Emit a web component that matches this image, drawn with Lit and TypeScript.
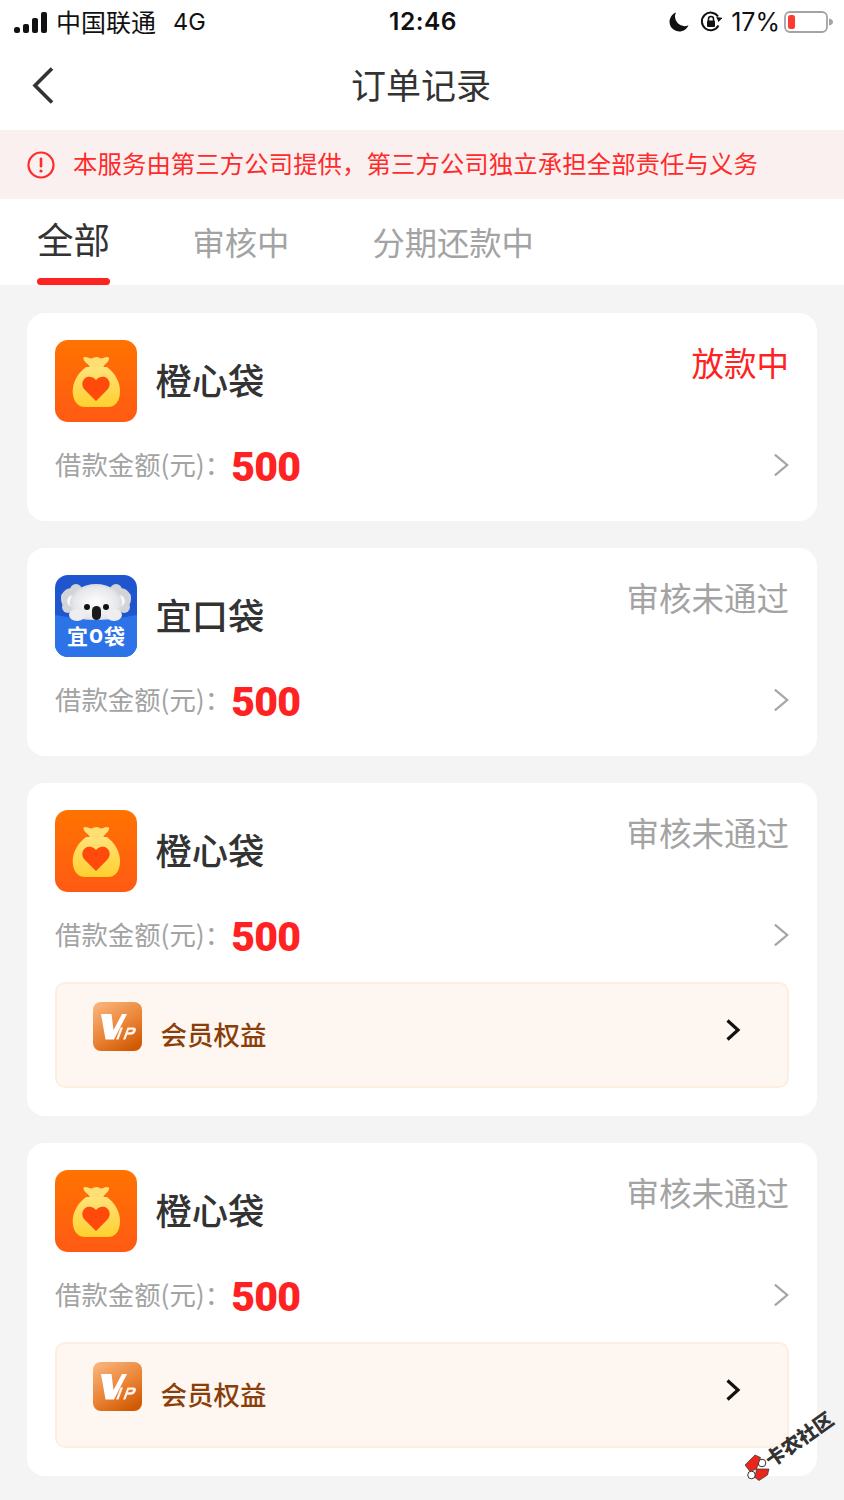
import { LitElement, html, css } from "lit";
import { customElement } from "lit/decorators.js";

let uid = 0;

const bagIcon = () => {
  const id = `bag${uid++}`;
  return html`<svg class="app-icon" viewBox="0 0 82 82">
    <defs>
      <linearGradient id="${id}a" x1="0" y1="0" x2="0" y2="1"><stop offset="0" stop-color="#ff7300"/><stop offset="1" stop-color="#ff5a14"/></linearGradient>
      <linearGradient id="${id}b" x1="0" y1="0" x2="0" y2="1"><stop offset="0" stop-color="#ffe27a"/><stop offset="1" stop-color="#ffd02e"/></linearGradient>
    </defs>
    <rect width="82" height="82" rx="13" fill="url(#${id}a)"/>
    <path d="M28 17.500c3-1.500 6 .5 8.500 1 2-.5 3.500-1.500 5-1.500s3 1 4.500 1.500c2.500-.5 5-2.500 8-1 .5 3-2 5-4 7-1 1-1.500 2-2 3h-13c-.5-1-1-2-2-3-2-2-5-4-4.500-7z" fill="#ffdf73"/>
    <path d="M31 27h21c8 6 13 15 13 24 0 10-4.500 16-12 16H30c-7.500 0-12.300-6-12.300-16 0-9 5.300-18 13.300-24z" fill="url(#${id}b)"/>
    <path d="M41 61 30 50c-3.500-3.500-3.500-8.500-.5-11.300 3-2.800 8-2.500 11.500 1.300 3.500-3.800 8.500-4.100 11.500-1.300 3 2.800 3 7.800-.5 11.300z" fill="#ff4a0c"/>
  </svg>`;
};

const koalaIcon = () => html`<svg class="app-icon" viewBox="0 0 82 82">
  <defs>
    <radialGradient id="fur" cx=".5" cy=".5" r=".6"><stop offset="0" stop-color="#ffffff"/><stop offset=".7" stop-color="#e6e7ea"/><stop offset="1" stop-color="#c4c6cc"/></radialGradient>
  </defs>
  <rect width="82" height="82" rx="13" fill="#1f55cf"/>
  <g fill="#d3d4d8">
    <circle cx="17" cy="24" r="11"/><circle cx="11" cy="22" r="5"/><circle cx="13" cy="32" r="6"/><circle cx="21" cy="15" r="6"/>
    <circle cx="65" cy="24" r="11"/><circle cx="71" cy="22" r="5"/><circle cx="69" cy="32" r="6"/><circle cx="61" cy="15" r="6"/>
  </g>
  <circle cx="18" cy="26" r="6" fill="#f7f7f8"/>
  <circle cx="64" cy="26" r="6" fill="#f7f7f8"/>
  <ellipse cx="41" cy="28" rx="26" ry="19" fill="url(#fur)"/>
  <path d="M0 40c14 2 24 5 41 5s27-3 41-5v29a13 13 0 0 1-13 13H13A13 13 0 0 1 0 69z" fill="#2d73e8"/>
  <ellipse cx="22" cy="40" rx="8" ry="6" fill="#eeeef0"/>
  <ellipse cx="59" cy="40" rx="8" ry="6" fill="#eeeef0"/>
  <circle cx="32" cy="32" r="3" fill="#111"/>
  <circle cx="51" cy="32" r="3" fill="#111"/>
  <rect x="37" y="31" width="9" height="14" rx="4.500" fill="#1a1a1a"/>
  <text x="41" y="69" text-anchor="middle" class="koala-text">宜<tspan class="koala-o" dx="1" dy="-1">O</tspan><tspan dx="1" dy="1">袋</tspan></text>
</svg>`;

const vipIcon = () => {
  const id = `vip${uid++}`;
  return html`<svg class="vip-icon" viewBox="0 0 49 49">
    <defs><linearGradient id="${id}" x1=".2" y1="0" x2=".8" y2="1"><stop offset="0" stop-color="#f9b077"/><stop offset=".55" stop-color="#e98233"/><stop offset="1" stop-color="#cf5700"/></linearGradient></defs>
    <rect width="49" height="49" rx="8" fill="url(#${id})"/>
    <path d="M8 12h10.500l2 16L29 12h5L21 37.500H12.500z" fill="#fff"/>
    <path d="M23 37.500l4.500-12h2.500l-4.500 12zM30 37.500l4.500-12h6c2.500 0 3 1.800 2.200 3.800-1 2.500-3 3.500-5.500 3.500h-3l-1.800 4.700zM34.800 30.200h2.800c1.200 0 2-.5 2.300-1.400.3-.8 0-1.100-.8-1.100h-3.200z" fill="#fff" fill-rule="evenodd" opacity=".92"/>
  </svg>`;
};

const chevron = () => html`<svg class="chev" viewBox="0 0 18 26"><path d="M2 2l13 11L2 24" fill="none" stroke="#a6a6a6" stroke-width="2.400"/></svg>`;

interface Order { name: string; icon: "bag" | "koala"; status: string; active?: boolean; vip?: boolean; }

const orders: Order[] = [
  { name: "橙心袋", icon: "bag", status: "放款中", active: true },
  { name: "宜口袋", icon: "koala", status: "审核未通过" },
  { name: "橙心袋", icon: "bag", status: "审核未通过", vip: true },
  { name: "橙心袋", icon: "bag", status: "审核未通过", vip: true },
];

@customElement("app-root")
export class AppRoot extends LitElement {
  static styles = css`
    :host { display: block; position: relative; width: 844px; height: 1500px; overflow: hidden; background: #f4f4f4; font-family: "Noto Sans CJK SC", "Liberation Sans", sans-serif; }
    .status { height: 44px; background: #fff; display: grid; grid-template-columns: 1fr auto 1fr; align-items: center; padding: 0 11px 4px 14px; box-sizing: border-box; color: #111; }
    .s-left { display: flex; align-items: center; font-size: 25px; line-height: 40px; }
    .sig { width: 34px; height: 21px; margin-right: 8px; margin-top: 2px; }
    .fourg { font-family: "Inter", "Liberation Sans", sans-serif; font-size: 23.500px; margin-left: 17px; margin-top: 2px; }
    .time { font-family: "Inter", "Liberation Sans", sans-serif; font-size: 24.500px; font-weight: 600; letter-spacing: .5px; margin-left: -1px; }
    .s-right { display: flex; justify-content: flex-end; align-items: center; font-family: "Inter", "Liberation Sans", sans-serif; font-size: 25px; margin-top: 2px; }
    .moon { width: 20px; height: 20px; margin-right: 11px; }
    .lock { width: 22px; height: 22px; margin-right: 9px; }
    .batt { width: 49px; height: 22px; margin-left: 4px; }
    .nav { height: 86px; box-sizing: border-box; padding-bottom: 8px; background: #fff; display: flex; align-items: center; justify-content: center; position: relative; font-size: 35px; color: #333; }
    .nav h1 { font: inherit; margin: 0 0 0 -2px; }
    .back { position: absolute; left: 30px; top: 22px; width: 26px; height: 38px; }
    .banner { height: 69px; box-sizing: border-box; padding-bottom: 4px; background: #fbf0f0; display: flex; align-items: center; padding-left: 26px; color: #ff2a2a; font-size: 24.400px; letter-spacing: .07px; }
    .warn { width: 30px; height: 30px; margin-right: 17px; margin-top: 4px; flex: none; }
    .tabs { height: 86px; background: #fff; display: flex; align-items: flex-start; padding-left: 37px; font-size: 32.300px; color: #a3a3a3; }
    .tab { height: 86px; line-height: 84px; margin-right: 83px; position: relative; }
    .tab.on { font-size: 36.500px; color: #333; line-height: 80px; margin-right: 82.500px; }
    .tab.on::after { content: ""; position: absolute; left: 0; right: 0; bottom: 0; height: 7px; border-radius: 4px; background: #ff2222; }
    .list { display: flex; flex-direction: column; gap: 27px; padding: 28px 27px; }
    .card { background: #fff; border-radius: 18px; padding: 27px 28px; }
    .head { display: flex; align-items: flex-start; }
    .app-icon { width: 82px; height: 82px; flex: none; display: block; }
    .koala-text { font-size: 21px; font-weight: 700; fill: #fff; }
    .koala-o { font-size: 18px; font-weight: 900; }
    .name { font-size: 36.300px; color: #333; font-weight: 500; line-height: 78px; margin-left: 18.500px; flex: 1; }
    .st { font-size: 32.500px; line-height: 44px; color: #a3a3a3; }
    .st.on { color: #ff2222; }
    .row { display: flex; align-items: center; height: 58px; margin-top: 14px; }
    .label { font-size: 26.400px; line-height: 56px; height: 58px; color: #a3a3a3; }
    .amt { font-family: "Roboto", "Liberation Sans", sans-serif; font-weight: 900; font-size: 41px; letter-spacing: -.7px; line-height: 58px; color: #ff2222; flex: 1; padding-top: 4px; }
    .chev { width: 17px; height: 26px; margin-right: -1px; }
    .vip { margin: 18px 0 1px; height: 106px; box-sizing: border-box; border: 2px solid #fdeee2; border-radius: 10px; background: #fef6f0; display: flex; align-items: flex-start; padding: 18px 46px 0 36px; }
    .vip-icon { width: 49px; height: 49px; flex: none; display: block; }
    .vip span { flex: 1; margin-left: 18.500px; margin-top: 12px; font-size: 26.500px; color: #8a3f0a; font-weight: 500; line-height: 40px; }
    .vchev { width: 16px; height: 24px; margin-top: 16px; }
    .mark { position: absolute; left: 745px; top: 1456px; display: flex; align-items: center; height: 24px; transform: rotate(-35deg); transform-origin: 12px 12px; font-size: 19.500px; font-weight: 900; color: #333; white-space: nowrap; text-shadow: 0 0 1px #fff; line-height: 24px; }
    .mark svg { width: 24px; height: 24px; flex: none; overflow: visible; }
  `;

  render() {
    return html`
      <div class="status">
        <div class="s-left">
          <svg class="sig" viewBox="0 0 34 21">
            <rect x="0" y="15" width="6" height="6" rx="2.500" fill="#111"/>
            <rect x="9" y="12" width="6" height="9" rx="2" fill="#111"/>
            <rect x="18" y="6" width="6" height="15" rx="2" fill="#111"/>
            <rect x="27" y="0" width="6" height="21" rx="2" fill="#111"/>
          </svg>
          中国联通<span class="fourg">4G</span>
        </div>
        <div class="time">12:46</div>
        <div class="s-right">
          <svg class="moon" viewBox="0 0 20 20"><path d="M7 .5a9.800 9.800 0 1 0 12.500 12.700A9.500 9.500 0 0 1 7 .5z" fill="#111"/></svg>
          <svg class="lock" viewBox="0 0 22 22">
            <path d="M18.500 14.500A8.800 8.800 0 1 1 18 5.500" fill="none" stroke="#111" stroke-width="2"/>
            <path d="M21 8.500l-5.500.5 3-5.500z" fill="#111" transform="rotate(70 18 8)"/>
            <rect x="7" y="9.500" width="8" height="6.500" rx="1" fill="#111"/>
            <path d="M8.500 10V8a2.500 2.500 0 0 1 5 0v2" fill="none" stroke="#111" stroke-width="1.500"/>
          </svg>
          17%
          <svg class="batt" viewBox="0 0 49 22">
            <rect x="1" y="1" width="42" height="20" rx="5" fill="#fff" stroke="#a3a3a3" stroke-width="1.800"/>
            <rect x="4" y="4" width="7" height="14" rx="2.500" fill="#ff3b30"/>
            <path d="M45 7.500c2.500 .5 4 1.500 4 3.500s-1.500 3-4 3.500z" fill="#a3a3a3"/>
          </svg>
        </div>
      </div>
      <div class="nav">
        <svg class="back" viewBox="0 0 26 38"><path d="M22 2.500 5 19.500l17 17" fill="none" stroke="#333" stroke-width="3.600"/></svg>
        <h1>订单记录</h1>
      </div>
      <div class="banner">
        <svg class="warn" viewBox="0 0 30 30"><circle cx="15" cy="15" r="12.500" fill="none" stroke="#ff2a2a" stroke-width="2.200"/><rect x="13.700" y="7.500" width="2.600" height="10" rx="1.300" fill="#ff2a2a"/><circle cx="15" cy="21" r="1.600" fill="#ff2a2a"/></svg>
        本服务由第三方公司提供，第三方公司独立承担全部责任与义务
      </div>
      <div class="tabs">
        <div class="tab on">全部</div>
        <div class="tab">审核中</div>
        <div class="tab">分期还款中</div>
      </div>
      <div class="list">
        ${orders.map((o) => html`
          <div class="card">
            <div class="head">
              ${o.icon === "bag" ? bagIcon() : koalaIcon()}
              <div class="name">${o.name}</div>
              <div class="st ${o.active ? "on" : ""}">${o.status}</div>
            </div>
            <div class="row">
              <div class="label">借款金额(元)：</div>
              <div class="amt">500</div>
              ${chevron()}
            </div>
            ${o.vip ? html`
              <div class="vip">
                ${vipIcon()}
                <span>会员权益</span>
                <svg class="vchev" viewBox="0 0 16 24"><path d="M2.500 2.500 13 12 2.500 21.500" fill="none" stroke="#111" stroke-width="3.200"/></svg>
              </div>` : ""}
          </div>`)}
      </div>
      <div class="mark">
        <svg viewBox="0 0 24 24">
          <g transform="rotate(35 12 12) translate(12 12)">
            <circle cx="5" cy="-5" r="3.800" fill="#fff" stroke="#333" stroke-width="1"/>
            <circle cx="-5.500" cy="7" r="3.800" fill="#fff" stroke="#333" stroke-width="1"/>
            <path d="M-12-3-2-13 3.500-10.500-.5 1-7 3.500z" fill="#e8261c" stroke="#333" stroke-width=".7"/>
            <path d="M-.5 1 12 1 10.500 7 2 12.500-2 9.500z" fill="#e8261c" stroke="#333" stroke-width=".7"/>
          </g>
        </svg>卡农社区
      </div>
    `;
  }
}
